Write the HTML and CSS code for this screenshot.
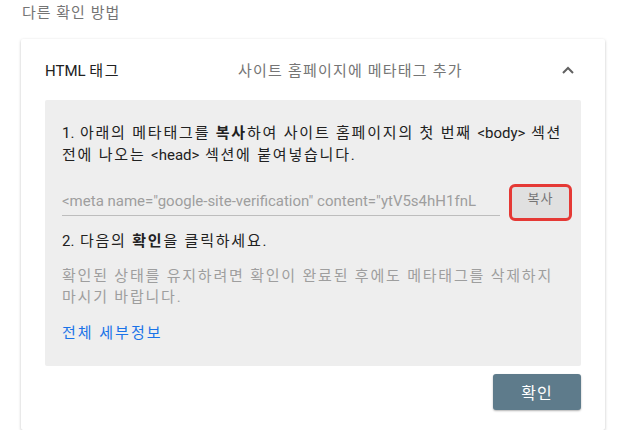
FILE: index.html
```html
<!DOCTYPE html>
<html lang="ko">
<head>
  <meta charset="UTF-8">
  <title>다른 확인 방법</title>
  <link rel="stylesheet" href="styles.css">
</head>
<body>

  <!-- Section title -->
  <div class="section-title">다른 확인 방법</div>

  <!-- Method card -->
  <div class="method-card">
    <div class="method-header">
      <span class="method-name">HTML <span class="ko">태그</span></span>
      <span class="method-desc">사이트 홈페이지에 메타태그 추가</span>
      <svg class="chevron" width="14" height="10" viewBox="0 0 14 10">
        <polyline points="2,8 7,3 12,8" fill="none" stroke="#616161" stroke-width="2"/>
      </svg>
    </div>

    <!-- Instructions panel -->
    <div class="method-panel">
      <p class="step"><span class="en">1.</span> 아래의 메타태그를 <b>복사</b>하여 사이트 홈페이지의 첫 번째 <span class="en">&lt;body&gt;</span> 섹션 전에 나오는 <span class="en">&lt;head&gt;</span> 섹션에 붙여넣습니다.</p>

      <div class="meta-row">
        <div class="meta-field">&lt;meta name="google-site-verification" content="ytV5s4hH1fnL</div>
        <button class="copy-btn">복사</button>
      </div>

      <p class="step"><span class="en">2.</span> 다음의 <b>확인</b>을 클릭하세요.</p>
      <p class="note">확인된 상태를 유지하려면 확인이 완료된 후에도 메타태그를 삭제하지 마시기 바랍니다.</p>
      <a class="details-link" href="#">전체 세부정보</a>
    </div>

    <div class="card-actions">
      <button class="verify-btn">확인</button>
    </div>
  </div>

</body>
</html>
```

FILE: styles.css
```css
/* Page */
body {
  margin: 0;
  background: #fff;
  font-family: Roboto, "Noto Sans CJK KR", sans-serif;
  color: #212121;
  overflow: hidden;
}

.en {
  letter-spacing: 0;
}

.ko {
  letter-spacing: 1.5px;
}

.section-title {
  padding: 3px 0 0 22px;
  font-size: 15px;
  line-height: 20px;
  letter-spacing: 1px;
  color: #757575;
}

/* Card */
.method-card {
  margin: 16px 0 0 21px;
  width: 584px;
  height: 391px;
  background: #fff;
  box-shadow: 0 1px 3px rgba(0, 0, 0, 0.25);
  border-radius: 2px;
  padding: 0 24px;
  box-sizing: border-box;
}

.method-header {
  display: flex;
  align-items: center;
  height: 61px;
}

.method-name {
  width: 193px;
  font-size: 15px;
  color: #212121;
}

.method-desc {
  flex: 1;
  font-size: 15px;
  letter-spacing: 1.2px;
  color: #757575;
}

.chevron {
  margin-right: 6px;
}

/* Gray instruction panel */
.method-panel {
  background: #eeeeee;
  border-radius: 2px;
  padding: 22px 9px 22px 17px;
  height: 266px;
  box-sizing: border-box;
}

.step {
  margin: 0;
  font-size: 15px;
  line-height: 22px;
  letter-spacing: 1.8px;
  color: #212121;
}

.step b {
  font-weight: bold;
}

.meta-row {
  display: flex;
  align-items: center;
  margin: 18px 0 9px;
}

.meta-field {
  flex: 1;
  min-width: 0;
  overflow: hidden;
  white-space: nowrap;
  font-size: 15px;
  line-height: 22px;
  color: #9e9e9e;
  border-bottom: 1px solid #bdbdbd;
  padding-bottom: 3px;
  margin-right: 9px;
}

.copy-btn {
  width: 63px;
  height: 37px;
  border: 3px solid #e53935;
  border-radius: 6px;
  background: #e0e0e0;
  color: #757575;
  font-family: inherit;
  font-size: 13px;
  letter-spacing: 1px;
  padding: 0 0 10px;
}

.note {
  margin: 14px 0 0;
  font-size: 15px;
  line-height: 21px;
  letter-spacing: 1.8px;
  color: #9e9e9e;
}

.details-link {
  display: inline-block;
  margin-top: 13px;
  font-size: 15px;
  letter-spacing: 2px;
  color: #1a73e8;
  text-decoration: none;
}

/* Actions */
.card-actions {
  display: flex;
  justify-content: flex-end;
  padding-top: 8px;
}

.verify-btn {
  width: 88px;
  height: 36px;
  border: none;
  border-radius: 3px;
  background: #5e7b8b;
  color: #fff;
  font-family: inherit;
  font-size: 16px;
  letter-spacing: 1px;
  box-shadow: 0 1px 2px rgba(0, 0, 0, 0.3);
}
```
